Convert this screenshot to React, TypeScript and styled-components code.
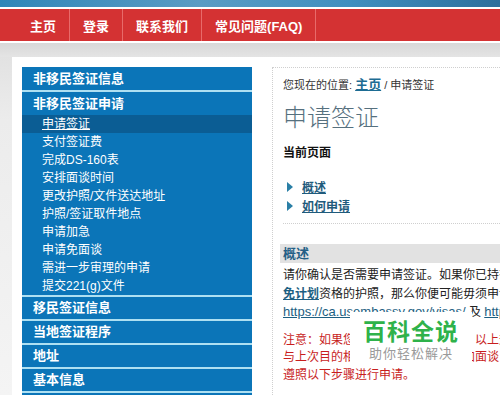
import styled, { createGlobalStyle } from 'styled-components';

const GlobalStyle = createGlobalStyle`
  body {
    margin: 0;
    background: #e0e0e0;
    font-family: "Liberation Sans", "Noto Sans CJK SC", sans-serif;
  }
`;

const Page = styled.div`
  width: 500px;
  height: 395px;
  overflow: hidden;
  background: linear-gradient(180deg, #d9d9d9 0px, #ececec 120px, #f4f4f4 395px);
`;

const Banner = styled.div`
  height: 7px;
  background: linear-gradient(90deg, #2f86b8 0%, #5a9cc4 40%, #3f8fbf 70%, #2d6f9c 100%);
  border-bottom: 2px solid #ffffff;
`;

const NavBar = styled.nav`
  height: 32px;
  background: #d43233;
  border-bottom: 2px solid #ffffff;
  display: flex;
  padding-left: 17px;
`;

const NavItem = styled.a`
  display: flex;
  align-items: center;
  padding: 0 13px;
  color: #ffffff;
  font-weight: bold;
  font-size: 13px;
  border-right: 1px solid #e86a6a;
  text-decoration: none;
`;

const Gap = styled.div`
  height: 14px;
  background: linear-gradient(180deg, #d8d8d8, #e4e4e4);
`;

const Panel = styled.div`
  margin-left: 12px;
  background: #ffffff;
  padding: 10px 0 0 10px;
  display: flex;
  gap: 20px;
  height: 400px;
`;

const Sidebar = styled.div`
  width: 230px;
  flex-shrink: 0;
  background: #0b75b8;
`;

const SideHeader = styled.div<{ $line?: boolean; $tall?: boolean }>`
  height: ${p => (p.$tall ? 23 : 22)}px;
  line-height: ${p => (p.$tall ? 23 : 22)}px;
  padding-left: 11px;
  color: #ffffff;
  font-weight: bold;
  font-size: 13px;
  border-bottom: ${p => (p.$line ? '2px solid #aee0f2' : 'none')};
`;

const SubList = styled.div`
  border-bottom: 2px solid #aee0f2;
`;

const SubItem = styled.div<{ $active?: boolean }>`
  height: 18px;
  line-height: 18px;
  padding-left: 20px;
  font-size: 12px;
  color: #ffffff;
  background: ${p => (p.$active ? '#0b5d94' : 'transparent')};
  text-decoration: ${p => (p.$active ? 'underline' : 'none')};
`;

const Content = styled.div`
  flex: 1;
  min-width: 0;
  border-left: 1px dotted #cfcfcf;
  border-top: 1px dotted #cfcfcf;
  padding: 9px 0 0 10px;
  white-space: nowrap;
`;

const Crumb = styled.div`
  font-size: 11px;
  color: #333333;
  height: 16px;
  line-height: 16px;
`;

const CrumbLink = styled.a`
  font-size: 13px;
  font-weight: bold;
  color: #1d6c93;
  text-decoration: underline;
`;

const Title = styled.h1`
  margin: 10px 0 0;
  font-size: 24px;
  font-weight: 300;
  line-height: 30px;
  color: #56707e;
`;

const SubTitle = styled.div`
  margin-top: 12px;
  font-size: 12px;
  font-weight: bold;
  color: #111111;
  line-height: 16px;
`;

const LinkList = styled.ul`
  list-style: none;
  margin: 16px 0 0;
  padding: 0 0 8px 4px;
  border-bottom: 1px dotted #cfcfcf;
  margin-right: -20px;
`;

const LinkRow = styled.li`
  display: flex;
  align-items: center;
  height: 19px;
  gap: 9px;
`;

const Arrow = styled.span`
  width: 0;
  height: 0;
  border-top: 5px solid transparent;
  border-bottom: 5px solid transparent;
  border-left: 6px solid #2a7fa6;
`;

const AnchorLink = styled.a`
  font-size: 12px;
  font-weight: bold;
  color: #1f5b7c;
  text-decoration: underline;
`;

const SectionBar = styled.div`
  margin: 20px 0 0 -3px;
  padding-left: 3px;
  height: 19px;
  line-height: 19px;
  background: #e2e2e2;
  font-size: 13px;
  font-weight: bold;
  color: #245f86;
`;

const Para = styled.p<{ $red?: boolean }>`
  margin: 3px 0 0;
  font-size: 12px;
  line-height: 18.5px;
  color: ${p => (p.$red ? '#c81e1e' : '#222222')};
`;

const InlineLink = styled.a`
  color: #1d5f82;
  font-weight: bold;
  text-decoration: underline;
`;

const UrlLink = styled.a`
  color: #1d5f82;
  font-size: 13px;
  text-decoration: underline;
`;

const BodyWrap = styled.div`
  position: relative;
`;

const RedPara = styled(Para)`
  margin-top: 10px;
  line-height: 17.5px;
`;

const Watermark = styled.div`
  position: absolute;
  left: 67px;
  top: 46px;
  width: 122px;
  height: 56px;
  background: #ffffff;
  display: flex;
  flex-direction: column;
  align-items: center;
  justify-content: center;
`;

const MarkTitle = styled.div`
  font-family: "Noto Sans CJK SC", sans-serif;
  font-size: 23px;
  font-weight: bold;
  color: #2fb24a;
  line-height: 26px;
  letter-spacing: 1px;
`;

const MarkSub = styled.div`
  font-family: "Noto Sans CJK SC", sans-serif;
  font-size: 13px;
  color: #9a9a9a;
  line-height: 20px;
  letter-spacing: 1px;
`;

const subItems = [
  '申请签证',
  '支付签证费',
  '完成DS-160表',
  '安排面谈时间',
  '更改护照/文件送达地址',
  '护照/签证取件地点',
  '申请加急',
  '申请免面谈',
  '需进一步审理的申请',
  '提交221(g)文件',
];

function App() {
  return (
    <Page>
      <GlobalStyle />
      <Banner />
      <NavBar>
        <NavItem>主页</NavItem>
        <NavItem>登录</NavItem>
        <NavItem>联系我们</NavItem>
        <NavItem>常见问题(FAQ)</NavItem>
      </NavBar>
      <Gap />
      <Panel>
        <Sidebar>
          <SideHeader $line $tall>非移民签证信息</SideHeader>
          <SideHeader $tall>非移民签证申请</SideHeader>
          <SubList>
            {subItems.map((s, i) => (
              <SubItem key={s} $active={i === 0}>{s}</SubItem>
            ))}
          </SubList>
          <SideHeader $line>移民签证信息</SideHeader>
          <SideHeader $line>当地签证程序</SideHeader>
          <SideHeader $line>地址</SideHeader>
          <SideHeader $line>基本信息</SideHeader>
        </Sidebar>
        <Content>
          <Crumb>
            您现在的位置: <CrumbLink>主页</CrumbLink> / 申请签证
          </Crumb>
          <Title>申请签证</Title>
          <SubTitle>当前页面</SubTitle>
          <LinkList>
            <LinkRow><Arrow /><AnchorLink>概述</AnchorLink></LinkRow>
            <LinkRow><Arrow /><AnchorLink>如何申请</AnchorLink></LinkRow>
          </LinkList>
          <SectionBar>概述</SectionBar>
          <BodyWrap>
            <Para>
              请你确认是否需要申请签证。如果你已持有美国签证或具有
              <br />
              <InlineLink>免计划</InlineLink>资格的护照，那么你便可能毋须申请签证。
              <br />
              <UrlLink>https://ca.usembassy.gov/visas/</UrlLink> 及 <UrlLink>https://travel.state.gov</UrlLink>
            </Para>
            <RedPara $red>
              注意：如果您的签证申请曾被拒签，以上规定不适用。
              <br />
              与上次目的相同的申请人须再次参加面谈，请您
              <br />
              遵照以下步骤进行申请。
            </RedPara>
            <Watermark>
              <MarkTitle>百科全说</MarkTitle>
              <MarkSub>助你轻松解决</MarkSub>
            </Watermark>
          </BodyWrap>
        </Content>
      </Panel>
    </Page>
  );
}

export default App;
